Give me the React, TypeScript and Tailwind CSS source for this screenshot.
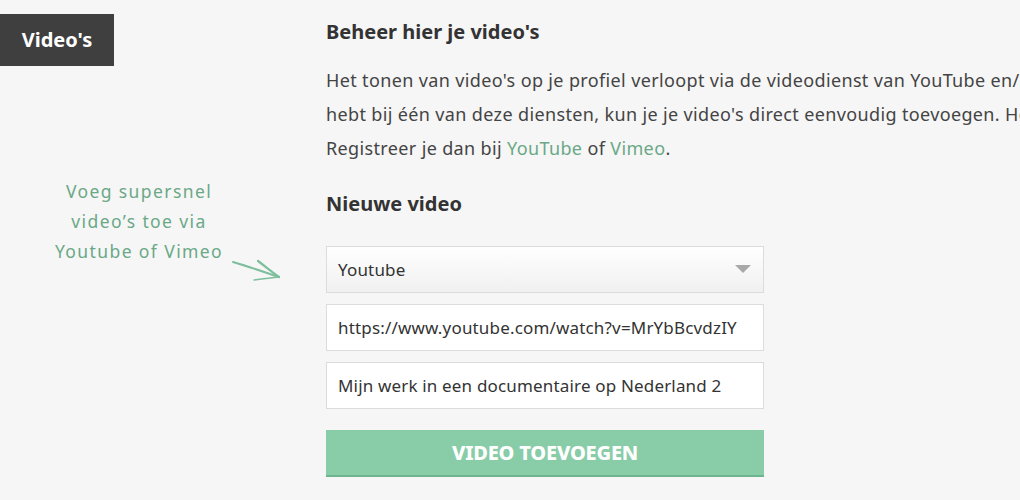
export default function App() {
  return (
    <div className="w-[1020px] h-[500px] overflow-hidden bg-[#f6f6f6] font-['Noto_Sans',sans-serif] text-[#333]">
      <div className="flex">
        {/* left column */}
        <div className="w-[326px] shrink-0">
          <div className="mt-[14px] w-[114px] h-[52px] bg-[#3f3f3f] flex items-center justify-center text-white text-[20px] font-bold">
            Video's
          </div>
          <div className="relative mt-[110px] w-[278px] text-center text-[17.5px] leading-[30px] tracking-[0.08em] text-[#6aa886]">
            <p>Voeg supersnel</p>
            <p>video’s toe via</p>
            <p>Youtube of Vimeo</p>
            <svg className="absolute left-[230px] top-[82px]" width="56" height="30" viewBox="0 0 56 30" fill="none" stroke="#7dbf9c" strokeLinecap="round">
              <path d="M3 4 C 20 9, 34 14, 49 19" strokeWidth="2" />
              <path d="M28 3 C 36 9, 42 14, 49 19" strokeWidth="2.2" />
              <path d="M49 19 C 40 20, 32 21, 24 22" strokeWidth="1.6" />
            </svg>
          </div>
        </div>
        {/* right column */}
        <div className="w-[760px] shrink-0 pt-[18px]">
          <h2 className="text-[20px] font-bold leading-[28px] text-[#333]">Beheer hier je video's</h2>
          <p className="mt-[17px] whitespace-nowrap text-[18px] leading-[34px] tracking-[0.02em] text-[#444]">
            Het tonen van video's op je profiel verloopt via de videodienst van YouTube en/of Vimeo. Als je een account
            <br />
            hebt bij één van deze diensten, kun je je video's direct eenvoudig toevoegen. Heb je nog geen account?
            <br />
            Registreer je dan bij <span className="text-[#6aa886]">YouTube</span> of{" "}
            <span className="text-[#6aa886]">Vimeo</span>.
          </p>
          <h3 className="mt-[25px] text-[20px] font-bold leading-[28px] text-[#333]">Nieuwe video</h3>
          <div className="mt-[28px] w-[438px] flex flex-col gap-[11px]">
            <div className="h-[47px] border border-[#dcdcdc] bg-gradient-to-b from-white to-[#f0f0f0] flex items-center justify-between px-[11px] text-[17px] tracking-[0.01em] text-[#333]">
              <span>Youtube</span>
              <svg width="16" height="10" viewBox="0 0 16 10" className="mr-[1px]">
                <polygon points="0,0 16,0 8,8" fill="#a8a8a8" />
              </svg>
            </div>
            <div className="h-[47px] border border-[#dcdcdc] bg-white flex items-center px-[11px] text-[17px] tracking-[0.01em] text-[#333]">
              https://www.youtube.com/watch?v=MrYbBcvdzIY
            </div>
            <div className="h-[47px] border border-[#dcdcdc] bg-white flex items-center px-[11px] text-[17px] tracking-[0.01em] text-[#333]">
              Mijn werk in een documentaire op Nederland 2
            </div>
            <button className="mt-[10px] h-[47px] bg-[#88cca8] border-b-2 border-[#6db48f] text-white text-[20px] font-extrabold tracking-[-0.01em]">
              VIDEO TOEVOEGEN
            </button>
          </div>
        </div>
      </div>
    </div>
  );
}
